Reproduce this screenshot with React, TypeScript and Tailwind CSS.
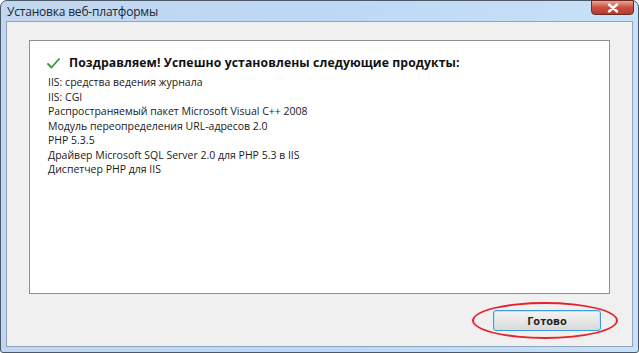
import React from "react";

const items = [
  "IIS: средства ведения журнала",
  "IIS: CGI",
  "Распространяемый пакет Microsoft Visual C++ 2008",
  "Модуль переопределения URL-адресов 2.0",
  "PHP 5.3.5",
  "Драйвер Microsoft SQL Server 2.0 для PHP 5.3 в IIS",
  "Диспетчер PHP для IIS",
];

export default function App() {
  return (
    <div className="w-[639px] h-[353px] bg-white overflow-hidden" style={{ fontFamily: '"Open Sans", "Noto Sans", sans-serif' }}>
      <div className="w-[639px] h-[353px] rounded-t-[7px] rounded-b-[3px] border border-[#4a5868] bg-gradient-to-r from-[#c2d7ee] via-[#bcd8f6] to-[#c9e1f8] flex flex-col px-[5px] pb-[5px]">
        {/* Title bar */}
        <div className="h-[20px] flex items-start justify-between shrink-0">
          <div className="text-[12px] leading-[20px] text-[#1b2533] pl-[1px] pt-[1px] tracking-[-0.2px]">Установка веб-платформы</div>
          <div className="w-[43px] h-[15px] -mt-[1px] mr-[-1px] rounded-b-[4px] border border-[#6b2a24] bg-gradient-to-b from-[#e8a495] via-[#c9503f] to-[#b73a2a] flex items-center justify-center">
            <svg width="12" height="10" viewBox="0 0 12 10">
              <path d="M2 1.5 L10 8.5 M10 1.5 L2 8.5" stroke="#ffffff" strokeWidth="2.4" strokeLinecap="round" />
            </svg>
          </div>
        </div>
        {/* Client area */}
        <div className="flex-1 border border-[#8fa4bd] bg-[#f0f0f0] flex flex-col">
          <div className="mx-[22px] mt-[18px] h-[254px] border border-[#8e8f8f] bg-white pl-[17px] pt-[14px]">
            <div className="flex items-center gap-[9px] h-[16px]">
              <svg width="13" height="11" viewBox="0 0 13 11">
                <path d="M1 6 L4.5 9.5 L12 1" stroke="#2e9a3a" strokeWidth="1.8" fill="none" strokeLinecap="round" strokeLinejoin="round" />
              </svg>
              <span className="text-[12.2px] font-bold text-[#111] tracking-[0.1px]">Поздравляем! Успешно установлены следующие продукты:</span>
            </div>
            <div className="mt-[4px] pl-[1px] flex flex-col">
              {items.map((t) => (
                <div key={t} className="text-[10.5px] leading-[14.5px] text-[#1a1a1a]">{t}</div>
              ))}
            </div>
          </div>
          <div className="flex justify-end pr-[31px] mt-[16px]">
            <div className="relative">
              <button className="block w-[108px] h-[21px] rounded-[3px] border border-[#3c9ad6] bg-gradient-to-b from-[#f4f4f4] via-[#e8e8e8] to-[#d8d8d8] text-[11px] leading-[19px] font-bold text-[#222] shadow-[inset_0_0_0_1px_#bfe4f8]">
                Готово
              </button>
              <div className="absolute left-[-21px] top-[-8px] w-[146px] h-[37px] rounded-[50%] border-2 border-[#e5232b] pointer-events-none" />
            </div>
          </div>
        </div>
      </div>
    </div>
  );
}
